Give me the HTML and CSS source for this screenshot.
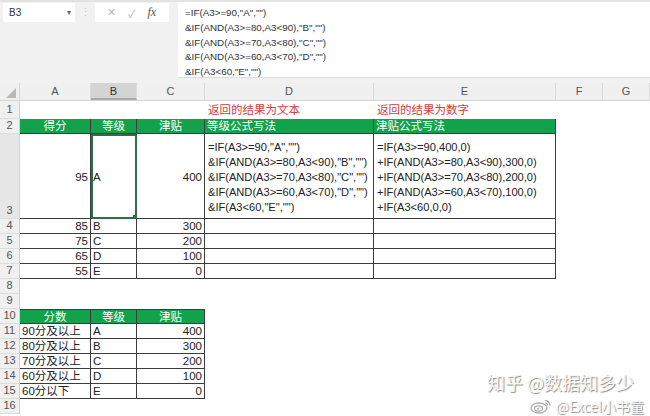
FILE: index.html
```html
<!DOCTYPE html>
<html lang="zh-CN">
<head>
    <meta charset="UTF-8">
    <title>津贴公式</title>
    <link rel="stylesheet" href="styles.css">
</head>
<body>
    <div class="app">
        <!-- 编辑栏 -->
        <div class="formula-bar">
            <div class="name-box"><span>B3</span><span class="caret">▾</span></div>
            <div class="grip">⋮</div>
            <div class="fx-tools">
                <span class="tool">✕</span>
                <span class="tool">✓</span>
                <span class="fx">fx</span>
            </div>
            <div class="formula">
                <div>=IF(A3&gt;=90,"A","")</div>
                <div>&amp;IF(AND(A3&gt;=80,A3&lt;90),"B","")</div>
                <div>&amp;IF(AND(A3&gt;=70,A3&lt;80),"C","")</div>
                <div>&amp;IF(AND(A3&gt;=60,A3&lt;70),"D","")</div>
                <div>&amp;IF(A3&lt;60,"E","")</div>
            </div>
        </div>

        <!-- 工作表 -->
        <div class="sheet">
            <div class="row col-head">
                <div class="corner"><span class="tri"></span></div>
                <div class="ch">A</div>
                <div class="ch active">B</div>
                <div class="ch">C</div>
                <div class="ch">D</div>
                <div class="ch">E</div>
                <div class="ch">F</div>
                <div class="ch">G</div>
            </div>

            <div class="row r1">
                <div class="rh">1</div>
                <div></div><div></div><div></div>
                <div class="note">返回的结果为文本</div>
                <div class="note">返回的结果为数字</div>
            </div>

            <div class="row r2">
                <div class="rh">2</div>
                <div class="c g ctr">得分</div>
                <div class="c g ctr">等级</div>
                <div class="c g ctr">津贴</div>
                <div class="c g">等级公式写法</div>
                <div class="c g">津贴公式写法</div>
            </div>

            <div class="row r3">
                <div class="rh">3</div>
                <div class="c num mid">95</div>
                <div class="c mid picked">A</div>
                <div class="c num mid">400</div>
                <div class="c lines">
                    <div>=IF(A3&gt;=90,"A","")</div>
                    <div>&amp;IF(AND(A3&gt;=80,A3&lt;90),"B","")</div>
                    <div>&amp;IF(AND(A3&gt;=70,A3&lt;80),"C","")</div>
                    <div>&amp;IF(AND(A3&gt;=60,A3&lt;70),"D","")</div>
                    <div>&amp;IF(A3&lt;60,"E","")</div>
                </div>
                <div class="c lines">
                    <div>=IF(A3&gt;=90,400,0)</div>
                    <div>+IF(AND(A3&gt;=80,A3&lt;90),300,0)</div>
                    <div>+IF(AND(A3&gt;=70,A3&lt;80),200,0)</div>
                    <div>+IF(AND(A3&gt;=60,A3&lt;70),100,0)</div>
                    <div>+IF(A3&lt;60,0,0)</div>
                </div>
            </div>

            <div class="row">
                <div class="rh">4</div>
                <div class="c num">85</div><div class="c">B</div><div class="c num">300</div><div class="c"></div><div class="c"></div>
            </div>
            <div class="row">
                <div class="rh">5</div>
                <div class="c num">75</div><div class="c">C</div><div class="c num">200</div><div class="c"></div><div class="c"></div>
            </div>
            <div class="row">
                <div class="rh">6</div>
                <div class="c num">65</div><div class="c">D</div><div class="c num">100</div><div class="c"></div><div class="c"></div>
            </div>
            <div class="row">
                <div class="rh">7</div>
                <div class="c num">55</div><div class="c">E</div><div class="c num">0</div><div class="c"></div><div class="c"></div>
            </div>
            <div class="row"><div class="rh">8</div></div>
            <div class="row"><div class="rh">9</div></div>

            <div class="row">
                <div class="rh">10</div>
                <div class="c g ctr top">分数</div>
                <div class="c g ctr top">等级</div>
                <div class="c g ctr top">津贴</div>
            </div>
            <div class="row">
                <div class="rh">11</div>
                <div class="c">90分及以上</div><div class="c">A</div><div class="c num">400</div>
            </div>
            <div class="row">
                <div class="rh">12</div>
                <div class="c">80分及以上</div><div class="c">B</div><div class="c num">300</div>
            </div>
            <div class="row">
                <div class="rh">13</div>
                <div class="c">70分及以上</div><div class="c">C</div><div class="c num">200</div>
            </div>
            <div class="row">
                <div class="rh">14</div>
                <div class="c">60分及以上</div><div class="c">D</div><div class="c num">100</div>
            </div>
            <div class="row">
                <div class="rh">15</div>
                <div class="c">60分以下</div><div class="c">E</div><div class="c num">0</div>
            </div>
            <div class="row"><div class="rh">16</div></div>
        </div>

        <!-- 水印 -->
        <div class="watermark">
            <div class="wm-line">知乎 @数据知多少</div>
            <div class="wm-line small">
                <svg class="weibo" width="22" height="16" viewBox="0 0 22 16">
                    <ellipse cx="9" cy="10" rx="8" ry="5" fill="none" stroke="#9a9a9a" stroke-width="1.3"/>
                    <ellipse cx="8.5" cy="10.5" rx="4" ry="2.6" fill="none" stroke="#9a9a9a" stroke-width="1.2"/>
                    <circle cx="8" cy="10.8" r="1" fill="#9a9a9a"/>
                    <path d="M15 2.5 A5 5 0 0 1 20 7.5" fill="none" stroke="#9a9a9a" stroke-width="1.3"/>
                    <path d="M15 5 A2.5 2.5 0 0 1 17.5 7.5" fill="none" stroke="#9a9a9a" stroke-width="1.2"/>
                </svg>
                <span>@Excel小书童</span>
            </div>
        </div>
    </div>
</body>
</html>
```

FILE: styles.css
```css
html, body {
    margin: 0;
    padding: 0;
    background: #fff;
}

.app {
    position: relative;
    width: 650px;
    height: 416px;
    overflow: hidden;
    font-family: "Liberation Sans", "Noto Sans CJK SC", sans-serif;
    color: #222;
}

/* 编辑栏 */
.formula-bar {
    display: flex;
    align-items: flex-start;
    height: 83px;
    background: #f1f1f1;
    border-top: 2px solid #e2e2e2;
    box-sizing: border-box;
}

.name-box {
    display: flex;
    justify-content: space-between;
    align-items: center;
    width: 72px;
    height: 19px;
    margin: 1px 0 0 3px;
    padding: 0 4px 0 6px;
    background: #fff;
    font-size: 10px;
    color: #333;
    box-sizing: border-box;
}

.caret {
    font-size: 8px;
    color: #666;
}

.grip {
    width: 20px;
    text-align: center;
    font-size: 11px;
    line-height: 20px;
    color: #c4c4c4;
}

.fx-tools {
    display: flex;
    align-items: center;
    gap: 12px;
    width: 74px;
    height: 19px;
    margin-top: 1px;
    padding-left: 12px;
    background: #fff;
    box-sizing: border-box;
}

.tool {
    font-size: 11px;
    color: #b8b8b8;
}

.fx {
    font-family: "Liberation Serif", serif;
    font-style: italic;
    font-size: 12px;
    color: #555;
}

.formula {
    flex: 1;
    height: 76px;
    margin-left: 9px;
    padding: 4px 0 0 7px;
    background: #fff;
    border-bottom: 1px solid #dedede;
    box-sizing: border-box;
    font-size: 9.8px;
    line-height: 14.8px;
    color: #333;
}

/* 工作表 */
.sheet {
    display: flex;
    flex-direction: column;
}

.row {
    display: grid;
    grid-template-columns: 20px 71px 46px 68px 169px 182px 47px 47px;
    height: 15px;
    font-size: 11.5px;
    line-height: 15px;
}

.row > div {
    box-sizing: border-box;
    white-space: nowrap;
    overflow: hidden;
}

.col-head {
    height: 17px;
    background: #f0f0f0;
    border-bottom: 1px solid #d6d6d6;
    line-height: 16px;
    font-size: 11px;
    color: #555;
}

.ch {
    text-align: center;
    border-right: 1px solid #dadada;
}

.ch.active {
    background: #d4d4d4;
    border-bottom: 2px solid #a9a9a9;
    color: #333;
}

.corner {
    position: relative;
    border-right: 1px solid #d6d6d6;
}

.tri {
    position: absolute;
    right: 3px;
    bottom: 2px;
    width: 0;
    height: 0;
    border-left: 10px solid transparent;
    border-bottom: 10px solid #b9b9b9;
}

.rh {
    display: flex;
    align-items: flex-end;
    justify-content: center;
    background: #f0f0f0;
    border-right: 1px solid #d0d0d0;
    border-bottom: 1px solid #dcdcdc;
    font-size: 11px;
    line-height: 15px;
    color: #555;
}

.r1 {
    height: 18px;
    line-height: 18px;
}

.r1 .rh {
    line-height: 18px;
}

.note {
    padding-left: 3px;
    color: #d23c3c;
    font-size: 11.5px;
}

.r2 {
    height: 15px;
}

.r3 {
    height: 85px;
}

.r3 .rh {
    background: #e6e6e6;
}

/* 表格单元格 */
.c {
    padding: 0 2px;
    border-right: 1px solid #3c3c3c;
    border-bottom: 1px solid #3c3c3c;
}

.num {
    text-align: right;
}

.ctr {
    text-align: center;
}

.g {
    background: #13a24c;
    color: #fff;
}

.top {
    border-top: 1px solid #3c3c3c;
    line-height: 14px;
}

.mid {
    display: flex;
    align-items: center;
    padding-top: 3px;
}

.mid.num {
    justify-content: flex-end;
}

.picked {
    position: relative;
    outline: 2px solid #2e6e48;
    outline-offset: -2px;
}

.picked::after {
    content: "";
    position: absolute;
    right: -1px;
    bottom: -1px;
    width: 4px;
    height: 4px;
    background: #2e6e48;
}

.lines {
    display: flex;
    flex-direction: column;
    justify-content: center;
    padding: 3px 0 0 3px;
    font-size: 11.1px;
    line-height: 15px;
}

/* 水印 */
.watermark {
    position: absolute;
    right: 15px;
    bottom: 0;
    display: flex;
    flex-direction: column;
    align-items: flex-end;
    gap: 3px;
    font-family: "Noto Sans CJK SC", sans-serif;
    color: #f6f6f6;
    text-shadow: 1px 1px 1px #8a8a8a, -1px -1px 0 #ffffff;
}

.wm-line {
    font-size: 18px;
    line-height: 22px;
    padding-right: 1px;
}

.wm-line.small {
    display: flex;
    align-items: center;
    gap: 4px;
    margin-right: -10px;
    font-size: 14px;
    line-height: 20px;
}

.weibo {
    opacity: 0.8;
}
```
